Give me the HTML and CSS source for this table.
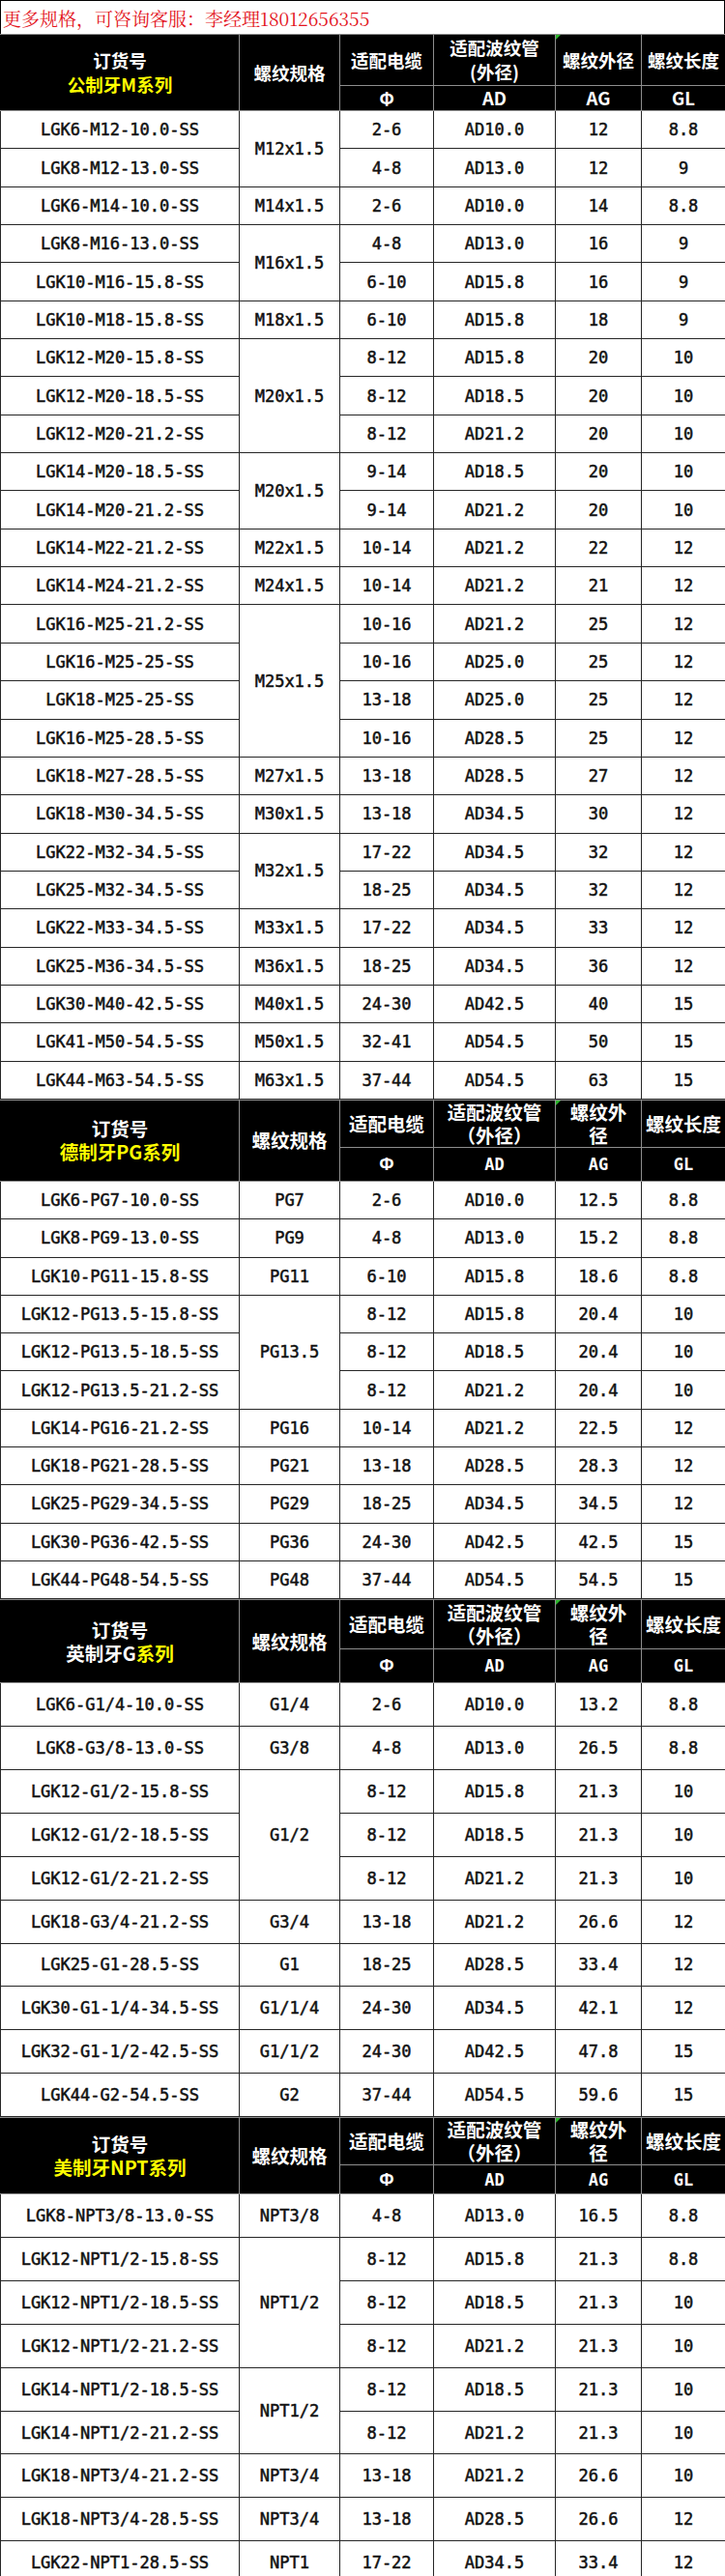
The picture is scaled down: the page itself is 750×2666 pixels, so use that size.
FILE: index.html
```html
<!DOCTYPE html>
<html lang="zh-CN">
<head>
<meta charset="utf-8">
<title>规格表</title>
<link rel="stylesheet" href="styles.css">
</head>
<body>
<div class="title">更多规格，可咨询客服：李经理18012656355</div>

<table class="spec m">
<colgroup><col class="c1"><col class="c2"><col class="c3"><col class="c4"><col class="c5"><col class="c6"></colgroup>
<thead>
<tr class="hr1"><th rowspan="2">订货号<br><span class="y">公制牙M系列</span></th><th rowspan="2">螺纹规格</th><th>适配电缆</th><th>适配波纹管<br>(外径)</th><th class="mark">螺纹外径</th><th>螺纹长度</th></tr>
<tr class="hr2"><th>Φ</th><th>AD</th><th>AG</th><th>GL</th></tr>
</thead>
<tbody>
<tr><td>LGK6-M12-10.0-SS</td><td rowspan="2">M12x1.5</td><td>2-6</td><td>AD10.0</td><td>12</td><td>8.8</td></tr>
<tr><td>LGK8-M12-13.0-SS</td><td>4-8</td><td>AD13.0</td><td>12</td><td>9</td></tr>
<tr><td>LGK6-M14-10.0-SS</td><td>M14x1.5</td><td>2-6</td><td>AD10.0</td><td>14</td><td>8.8</td></tr>
<tr><td>LGK8-M16-13.0-SS</td><td rowspan="2">M16x1.5</td><td>4-8</td><td>AD13.0</td><td>16</td><td>9</td></tr>
<tr><td>LGK10-M16-15.8-SS</td><td>6-10</td><td>AD15.8</td><td>16</td><td>9</td></tr>
<tr><td>LGK10-M18-15.8-SS</td><td>M18x1.5</td><td>6-10</td><td>AD15.8</td><td>18</td><td>9</td></tr>
<tr><td>LGK12-M20-15.8-SS</td><td rowspan="3">M20x1.5</td><td>8-12</td><td>AD15.8</td><td>20</td><td>10</td></tr>
<tr><td>LGK12-M20-18.5-SS</td><td>8-12</td><td>AD18.5</td><td>20</td><td>10</td></tr>
<tr><td>LGK12-M20-21.2-SS</td><td>8-12</td><td>AD21.2</td><td>20</td><td>10</td></tr>
<tr><td>LGK14-M20-18.5-SS</td><td rowspan="2">M20x1.5</td><td>9-14</td><td>AD18.5</td><td>20</td><td>10</td></tr>
<tr><td>LGK14-M20-21.2-SS</td><td>9-14</td><td>AD21.2</td><td>20</td><td>10</td></tr>
<tr><td>LGK14-M22-21.2-SS</td><td>M22x1.5</td><td>10-14</td><td>AD21.2</td><td>22</td><td>12</td></tr>
<tr><td>LGK14-M24-21.2-SS</td><td>M24x1.5</td><td>10-14</td><td>AD21.2</td><td>21</td><td>12</td></tr>
<tr><td>LGK16-M25-21.2-SS</td><td rowspan="4">M25x1.5</td><td>10-16</td><td>AD21.2</td><td>25</td><td>12</td></tr>
<tr><td>LGK16-M25-25-SS</td><td>10-16</td><td>AD25.0</td><td>25</td><td>12</td></tr>
<tr><td>LGK18-M25-25-SS</td><td>13-18</td><td>AD25.0</td><td>25</td><td>12</td></tr>
<tr><td>LGK16-M25-28.5-SS</td><td>10-16</td><td>AD28.5</td><td>25</td><td>12</td></tr>
<tr><td>LGK18-M27-28.5-SS</td><td>M27x1.5</td><td>13-18</td><td>AD28.5</td><td>27</td><td>12</td></tr>
<tr><td>LGK18-M30-34.5-SS</td><td>M30x1.5</td><td>13-18</td><td>AD34.5</td><td>30</td><td>12</td></tr>
<tr><td>LGK22-M32-34.5-SS</td><td rowspan="2">M32x1.5</td><td>17-22</td><td>AD34.5</td><td>32</td><td>12</td></tr>
<tr><td>LGK25-M32-34.5-SS</td><td>18-25</td><td>AD34.5</td><td>32</td><td>12</td></tr>
<tr><td>LGK22-M33-34.5-SS</td><td>M33x1.5</td><td>17-22</td><td>AD34.5</td><td>33</td><td>12</td></tr>
<tr><td>LGK25-M36-34.5-SS</td><td>M36x1.5</td><td>18-25</td><td>AD34.5</td><td>36</td><td>12</td></tr>
<tr><td>LGK30-M40-42.5-SS</td><td>M40x1.5</td><td>24-30</td><td>AD42.5</td><td>40</td><td>15</td></tr>
<tr><td>LGK41-M50-54.5-SS</td><td>M50x1.5</td><td>32-41</td><td>AD54.5</td><td>50</td><td>15</td></tr>
<tr><td>LGK44-M63-54.5-SS</td><td>M63x1.5</td><td>37-44</td><td>AD54.5</td><td>63</td><td>15</td></tr>
</tbody>
</table>

<table class="spec pg alt">
<colgroup><col class="c1"><col class="c2"><col class="c3"><col class="c4"><col class="c5"><col class="c6"></colgroup>
<thead>
<tr class="hr1"><th rowspan="2">订货号<br><span class="y">德制牙PG系列</span></th><th rowspan="2">螺纹规格</th><th>适配电缆</th><th>适配波纹管<br>（外径）</th><th class="mark">螺纹外<br>径</th><th>螺纹长度</th></tr>
<tr class="hr2"><th class="phi">Φ</th><th class="code">AD</th><th class="code">AG</th><th class="code">GL</th></tr>
</thead>
<tbody>
<tr><td>LGK6-PG7-10.0-SS</td><td>PG7</td><td>2-6</td><td>AD10.0</td><td>12.5</td><td>8.8</td></tr>
<tr><td>LGK8-PG9-13.0-SS</td><td>PG9</td><td>4-8</td><td>AD13.0</td><td>15.2</td><td>8.8</td></tr>
<tr><td>LGK10-PG11-15.8-SS</td><td>PG11</td><td>6-10</td><td>AD15.8</td><td>18.6</td><td>8.8</td></tr>
<tr><td>LGK12-PG13.5-15.8-SS</td><td rowspan="3">PG13.5</td><td>8-12</td><td>AD15.8</td><td>20.4</td><td>10</td></tr>
<tr><td>LGK12-PG13.5-18.5-SS</td><td>8-12</td><td>AD18.5</td><td>20.4</td><td>10</td></tr>
<tr><td>LGK12-PG13.5-21.2-SS</td><td>8-12</td><td>AD21.2</td><td>20.4</td><td>10</td></tr>
<tr><td>LGK14-PG16-21.2-SS</td><td>PG16</td><td>10-14</td><td>AD21.2</td><td>22.5</td><td>12</td></tr>
<tr><td>LGK18-PG21-28.5-SS</td><td>PG21</td><td>13-18</td><td>AD28.5</td><td>28.3</td><td>12</td></tr>
<tr><td>LGK25-PG29-34.5-SS</td><td>PG29</td><td>18-25</td><td>AD34.5</td><td>34.5</td><td>12</td></tr>
<tr><td>LGK30-PG36-42.5-SS</td><td>PG36</td><td>24-30</td><td>AD42.5</td><td>42.5</td><td>15</td></tr>
<tr><td>LGK44-PG48-54.5-SS</td><td>PG48</td><td>37-44</td><td>AD54.5</td><td>54.5</td><td>15</td></tr>
</tbody>
</table>

<table class="spec g alt">
<colgroup><col class="c1"><col class="c2"><col class="c3"><col class="c4"><col class="c5"><col class="c6"></colgroup>
<thead>
<tr class="hr1"><th rowspan="2">订货号<br>英制牙G<span class="y">系列</span></th><th rowspan="2">螺纹规格</th><th>适配电缆</th><th>适配波纹管<br>（外径）</th><th class="mark">螺纹外<br>径</th><th>螺纹长度</th></tr>
<tr class="hr2"><th class="phi">Φ</th><th class="code">AD</th><th class="code">AG</th><th class="code">GL</th></tr>
</thead>
<tbody>
<tr><td>LGK6-G1/4-10.0-SS</td><td>G1/4</td><td>2-6</td><td>AD10.0</td><td>13.2</td><td>8.8</td></tr>
<tr><td>LGK8-G3/8-13.0-SS</td><td>G3/8</td><td>4-8</td><td>AD13.0</td><td>26.5</td><td>8.8</td></tr>
<tr><td>LGK12-G1/2-15.8-SS</td><td rowspan="3">G1/2</td><td>8-12</td><td>AD15.8</td><td>21.3</td><td>10</td></tr>
<tr><td>LGK12-G1/2-18.5-SS</td><td>8-12</td><td>AD18.5</td><td>21.3</td><td>10</td></tr>
<tr><td>LGK12-G1/2-21.2-SS</td><td>8-12</td><td>AD21.2</td><td>21.3</td><td>10</td></tr>
<tr><td>LGK18-G3/4-21.2-SS</td><td>G3/4</td><td>13-18</td><td>AD21.2</td><td>26.6</td><td>12</td></tr>
<tr><td>LGK25-G1-28.5-SS</td><td>G1</td><td>18-25</td><td>AD28.5</td><td>33.4</td><td>12</td></tr>
<tr><td>LGK30-G1-1/4-34.5-SS</td><td>G1/1/4</td><td>24-30</td><td>AD34.5</td><td>42.1</td><td>12</td></tr>
<tr><td>LGK32-G1-1/2-42.5-SS</td><td>G1/1/2</td><td>24-30</td><td>AD42.5</td><td>47.8</td><td>15</td></tr>
<tr><td>LGK44-G2-54.5-SS</td><td>G2</td><td>37-44</td><td>AD54.5</td><td>59.6</td><td>15</td></tr>
</tbody>
</table>

<table class="spec npt alt">
<colgroup><col class="c1"><col class="c2"><col class="c3"><col class="c4"><col class="c5"><col class="c6"></colgroup>
<thead>
<tr class="hr1"><th rowspan="2">订货号<br><span class="y">美制牙NPT系列</span></th><th rowspan="2">螺纹规格</th><th>适配电缆</th><th>适配波纹管<br>（外径）</th><th class="mark">螺纹外<br>径</th><th>螺纹长度</th></tr>
<tr class="hr2"><th class="phi">Φ</th><th class="code">AD</th><th class="code">AG</th><th class="code">GL</th></tr>
</thead>
<tbody>
<tr><td>LGK8-NPT3/8-13.0-SS</td><td>NPT3/8</td><td>4-8</td><td>AD13.0</td><td>16.5</td><td>8.8</td></tr>
<tr><td>LGK12-NPT1/2-15.8-SS</td><td rowspan="3">NPT1/2</td><td>8-12</td><td>AD15.8</td><td>21.3</td><td>8.8</td></tr>
<tr><td>LGK12-NPT1/2-18.5-SS</td><td>8-12</td><td>AD18.5</td><td>21.3</td><td>10</td></tr>
<tr><td>LGK12-NPT1/2-21.2-SS</td><td>8-12</td><td>AD21.2</td><td>21.3</td><td>10</td></tr>
<tr><td>LGK14-NPT1/2-18.5-SS</td><td rowspan="2">NPT1/2</td><td>8-12</td><td>AD18.5</td><td>21.3</td><td>10</td></tr>
<tr><td>LGK14-NPT1/2-21.2-SS</td><td>8-12</td><td>AD21.2</td><td>21.3</td><td>10</td></tr>
<tr><td>LGK18-NPT3/4-21.2-SS</td><td>NPT3/4</td><td>13-18</td><td>AD21.2</td><td>26.6</td><td>10</td></tr>
<tr><td>LGK18-NPT3/4-28.5-SS</td><td>NPT3/4</td><td>13-18</td><td>AD28.5</td><td>26.6</td><td>12</td></tr>
<tr><td>LGK22-NPT1-28.5-SS</td><td>NPT1</td><td>17-22</td><td>AD34.5</td><td>33.4</td><td>12</td></tr>
</tbody>
</table>
</body>
</html>
```

FILE: styles.css
```css
* { box-sizing: border-box; }
html, body { margin: 0; padding: 0; background: #fff; }
body { width: 750px; }

.title {
  height: 35px;
  border: 1px solid #000;
  border-bottom: none;
  color: #e3141c;
  font-family: "Noto Serif CJK SC", "Liberation Serif", "Noto Sans CJK SC", serif;
  font-size: 19px;
  line-height: 36px;
  padding-left: 2px;
  white-space: nowrap;
}

.spec {
  width: 750px;
  border-collapse: collapse;
  table-layout: fixed;
}
.spec .c1 { width: 247px; }
.spec .c2 { width: 104px; }
.spec .c3 { width: 97px; }
.spec .c4 { width: 126px; }
.spec .c5 { width: 89px; }
.spec .c6 { width: 87px; }

.spec th, .spec td {
  padding: 0;
  text-align: center;
  vertical-align: middle;
  white-space: nowrap;
}

.spec th {
  background: #000;
  color: #fff;
  border: 1.5px solid #8e8e8e;
  font-family: "Noto Sans CJK SC", sans-serif;
  font-weight: 700;
  font-size: 18.5px;
  line-height: 25px;
}
.spec th:first-child { border-left-color: #000; }
.spec tr.hr1 th:last-child, .spec tr.hr2 th:last-child { border-right-color: #000; }
.spec .mark { position: relative; }
.spec .mark::before {
  content: "";
  position: absolute;
  left: 0;
  top: 0;
  border-top: 5px solid #2bb52b;
  border-right: 5px solid transparent;
}

.spec .y { color: #ffff00; }

.spec td {
  border: 1.5px solid #262626;
  font-family: "DejaVu Sans Mono", monospace;
  font-size: 17px;
  color: #111;
  -webkit-text-stroke: 0.5px #111;
}

.m .hr1 { height: 53px; }
.m .hr2 { height: 26px; }
.m tbody tr { height: 39.35px; }

.alt th { font-size: 19.5px; line-height: 24px; font-weight: 700; }
.alt th.code {
  font-family: "DejaVu Sans Mono", monospace;
  font-size: 17px;
}
.alt th.phi {
  font-family: "Noto Sans", "DejaVu Sans", sans-serif;
  font-size: 17px;
}

.pg .hr1 { height: 45px; }
.pg .hr2 { height: 35px; }
.pg tbody tr { height: 39.3px; }

.g .hr1 { height: 51px; }
.g .hr2 { height: 35px; }
.g tbody tr { height: 44.9px; }

.npt .hr1 { height: 46px; }
.npt .hr2 { height: 30px; }
.npt tbody tr { height: 44.9px; }
```
